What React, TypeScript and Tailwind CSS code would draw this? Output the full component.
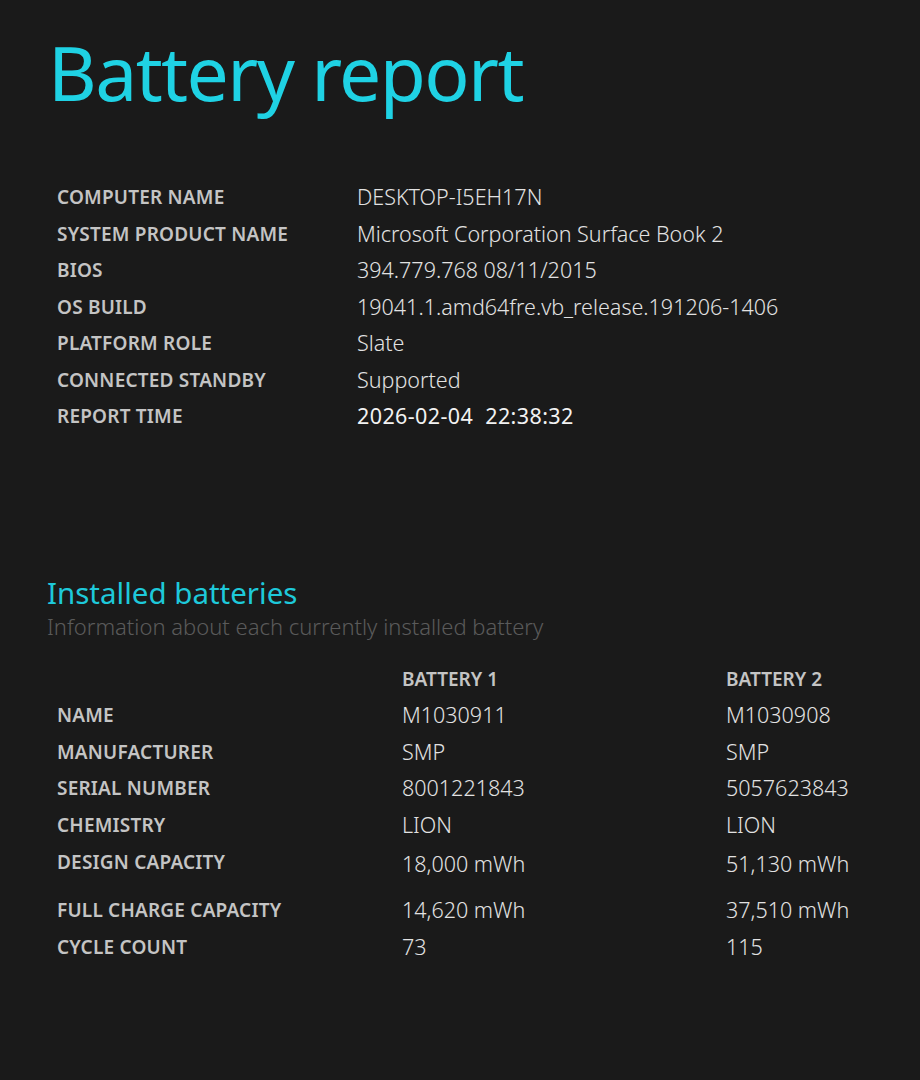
const systemInfo = [
  { label: 'COMPUTER NAME', value: 'DESKTOP-I5EH17N' },
  { label: 'SYSTEM PRODUCT NAME', value: 'Microsoft Corporation Surface Book 2' },
  { label: 'BIOS', value: '394.779.768 08/11/2015' },
  { label: 'OS BUILD', value: '19041.1.amd64fre.vb_release.191206-1406' },
  { label: 'PLATFORM ROLE', value: 'Slate' },
  { label: 'CONNECTED STANDBY', value: 'Supported' },
]

const batteries = [
  { label: 'NAME', b1: 'M1030911', b2: 'M1030908' },
  { label: 'MANUFACTURER', b1: 'SMP', b2: 'SMP' },
  { label: 'SERIAL NUMBER', b1: '8001221843', b2: '5057623843' },
  { label: 'CHEMISTRY', b1: 'LION', b2: 'LION' },
  { label: 'DESIGN CAPACITY', b1: '18,000 mWh', b2: '51,130 mWh', gapAfter: true },
  { label: 'FULL CHARGE CAPACITY', b1: '14,620 mWh', b2: '37,510 mWh' },
  { label: 'CYCLE COUNT', b1: '73', b2: '115' },
]

export default function App() {
  return (
    <div className="min-h-[1080px] w-[920px] bg-[#1a1a1a] font-['Noto_Sans',sans-serif] text-[#e4e4e4]">
      <div className="pl-[48px] pt-[22px]">
        <h1 className="text-[75px] leading-[100px] font-normal text-[#1fd2e4] tracking-[-1.6px]">Battery report</h1>
      </div>

      {/* system info */}
      <div className="mt-[57px] pl-[57px]">
        {systemInfo.map((row) => (
          <div key={row.label} className="flex h-[36.5px] items-center">
            <div className="w-[300px] text-[19px] font-semibold tracking-[0.2px] text-[#c4c4c4]">{row.label}</div>
            <div className="text-[21.5px] font-light text-[#e2e2e2]">{row.value}</div>
          </div>
        ))}
        <div className="flex h-[36.5px] items-center">
          <div className="w-[300px] text-[19px] font-semibold tracking-[0.2px] text-[#c4c4c4]">REPORT TIME</div>
          <div className="text-[21.5px] font-normal tracking-[0.4px] text-[#f2f2f2]">2026-02-04&nbsp;&nbsp;22:38:32</div>
        </div>
      </div>

      {/* installed batteries */}
      <div className="mt-[140px] pl-[47px]">
        <h2 className="text-[29.5px] leading-[36px] font-normal text-[#1ec9da]">Installed batteries</h2>
        <p className="text-[22px] leading-[30px] font-light text-[#5a5a5a]">Information about each currently installed battery</p>
      </div>

      <div className="mt-[20px] pl-[57px]">
        <div className="flex h-[36.5px] items-center">
          <div className="w-[345px]" />
          <div className="w-[324px] text-[19px] font-semibold text-[#c4c4c4]">BATTERY 1</div>
          <div className="text-[19px] font-semibold text-[#c4c4c4]">BATTERY 2</div>
        </div>
        {batteries.map((row) => (
          <div key={row.label} className={row.gapAfter ? 'flex h-[49px] items-start pt-[5px]' : 'flex h-[36.5px] items-center'}>
            <div className="w-[345px] text-[19px] font-semibold tracking-[0.2px] text-[#c4c4c4]">{row.label}</div>
            <div className="w-[324px] text-[21.5px] font-light text-[#e2e2e2]">{row.b1}</div>
            <div className="text-[21.5px] font-light text-[#e2e2e2]">{row.b2}</div>
          </div>
        ))}
      </div>
    </div>
  )
}
